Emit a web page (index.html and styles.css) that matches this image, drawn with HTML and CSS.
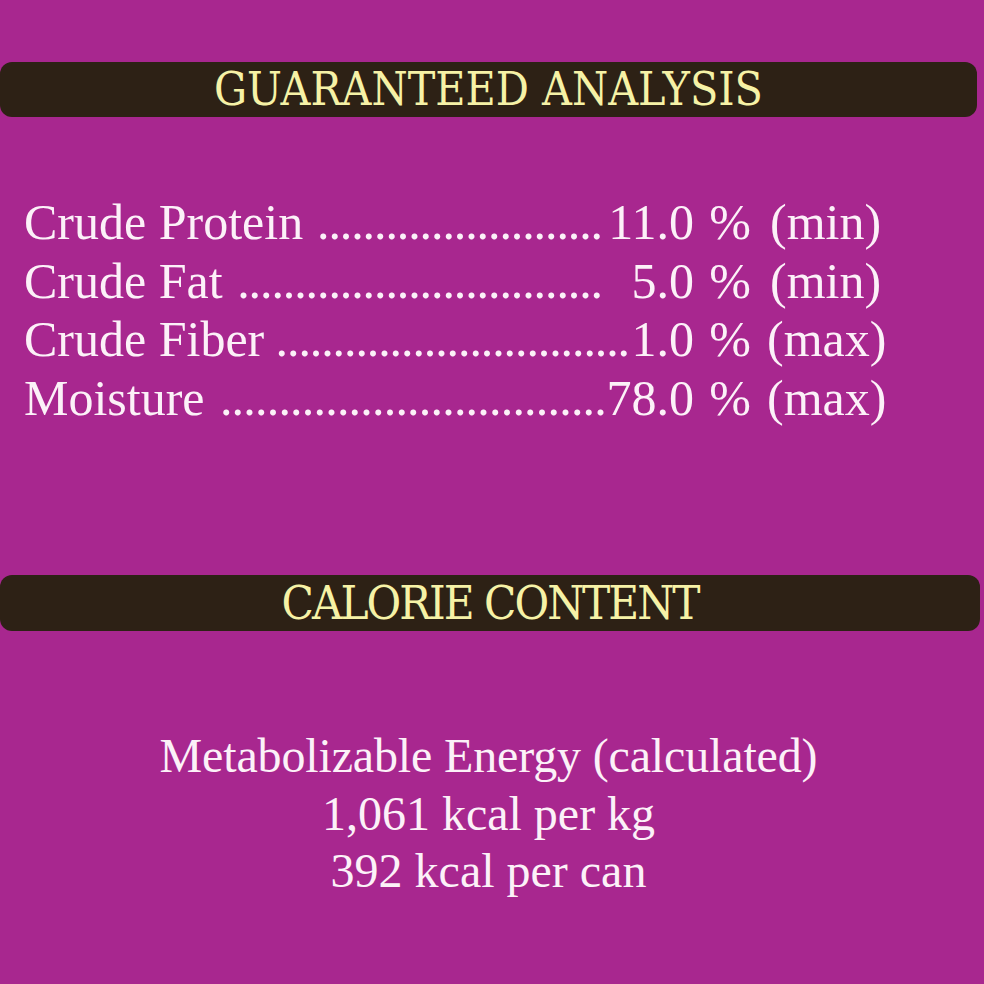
FILE: index.html
```html
<!DOCTYPE html>
<html lang="en">
<head>
<meta charset="utf-8">
<title>Guaranteed Analysis</title>
<link rel="stylesheet" href="styles.css">
</head>
<body>
<main class="panel">
  <h2 class="banner banner--first">GUARANTEED ANALYSIS</h2>
  <ul class="analysis">
    <li class="row">
      <span class="label">Crude Protein</span>
      <span class="leader">.........................</span>
      <span class="value value--a">11.0</span>
      <span class="pct">%</span>
      <span class="unit unit--min">(min)</span>
    </li>
    <li class="row">
      <span class="label">Crude Fat</span>
      <span class="leader">................................</span>
      <span class="value value--a">5.0</span>
      <span class="pct">%</span>
      <span class="unit unit--min">(min)</span>
    </li>
    <li class="row">
      <span class="label">Crude Fiber</span>
      <span class="leader">...............................</span>
      <span class="value value--b">1.0</span>
      <span class="pct">%</span>
      <span class="unit">(max)</span>
    </li>
    <li class="row">
      <span class="label">Moisture</span>
      <span class="leader leader--wide">.................................</span>
      <span class="value value--c">78.0</span>
      <span class="pct">%</span>
      <span class="unit">(max)</span>
    </li>
  </ul>
  <h2 class="banner banner--second">CALORIE CONTENT</h2>
  <div class="calories">
    <p>Metabolizable Energy (calculated)</p>
    <p>1,061 kcal per kg</p>
    <p>392 kcal per can</p>
  </div>
</main>
</body>
</html>
```

FILE: styles.css
```css
html, body {
  margin: 0;
  padding: 0;
}

body {
  background: #a8278f;
  width: 984px;
  height: 984px;
  overflow: hidden;
  font-family: "Liberation Serif", "Times New Roman", serif;
  color: #fcf1f8;
}

.panel {
  padding-top: 62px;
  width: 977px;
}

.banner {
  margin: 0;
  height: 55px;
  background: #2d2115;
  border-radius: 12px;
  color: #f6f2a6;
  font-family: "DejaVu Serif Condensed", "DejaVu Serif", serif;
  font-stretch: condensed;
  font-weight: normal;
  font-size: 46px;
  line-height: 55px;
  text-align: center;
}

.banner--second {
  width: 980px;
  margin-top: 148px;
  height: 56px;
  line-height: 56px;
  font-size: 47px;
  letter-spacing: -2px;
}

.analysis {
  list-style: none;
  margin: 76px 0 0 0;
  padding: 0 90px 0 24px;
  font-size: 50px;
  line-height: 58.5px;
}

.row {
  display: flex;
  align-items: baseline;
  white-space: nowrap;
}

.label {
  flex: none;
}

.leader {
  flex: 1 1 auto;
  min-width: 0;
  text-align: right;
  letter-spacing: -1.1px;
  padding-right: 2px;
}

.leader--wide {
  letter-spacing: -0.8px;
  padding-right: 0;
}

.value {
  flex: none;
  text-align: right;
}

.value--a { width: 90px; }
.value--b { width: 63px; }
.value--c { width: 88px; }

.pct {
  flex: none;
  width: 57px;
  text-align: right;
}

.unit {
  flex: none;
  width: 120px;
  padding-left: 16px;
}

.unit--min {
  padding-left: 19px;
  width: 117px;
}

.calories {
  margin-top: 96px;
  text-align: center;
  font-size: 48px;
  line-height: 57.5px;
}

.calories p:first-child {
  letter-spacing: -0.15px;
}

.calories p {
  margin: 0;
}
```
